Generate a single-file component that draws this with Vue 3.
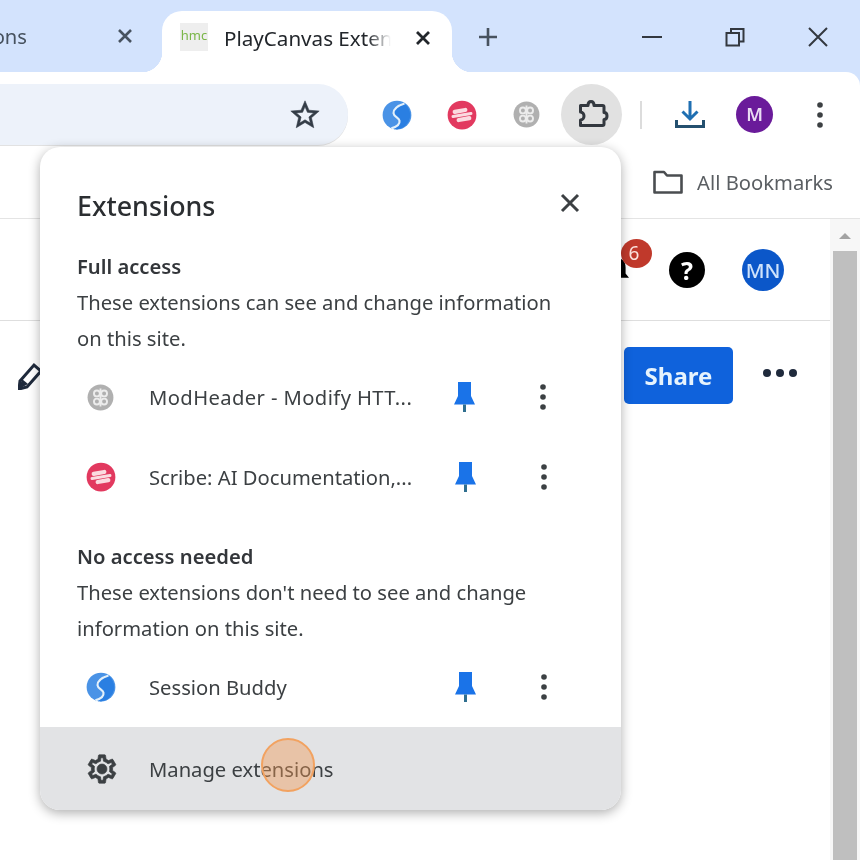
<template>
  <div class="page">
    <svg class="defs" aria-hidden="true">
      <symbol id="ext-session" viewBox="0 0 24 24">
        <circle cx="12" cy="12" r="11.5" fill="#4a93e6" />
        <path d="M17 2.200A11.500 11.500 0 0 1 12 23.500c-1.500 0-2.500-.3-3.500-.7 3.500-1.500 6-3.500 5.500-6.300-.5-2.500-4.500-2.800-4.800-6C9.500 7 13 4 17 2.200z" fill="#2a7fe2" />
        <path d="M18 2.800C13 4.400 9.200 7 9.200 10.500c.3 3.200 4.300 3.500 4.800 6 .5 2.800-2 4.800-6.500 6.200" fill="none" stroke="#e3f0fa" stroke-width="1.700" />
      </symbol>
      <symbol id="ext-scribe" viewBox="0 0 24 24">
        <circle cx="12" cy="12" r="11.500" fill="#e2395f" />
        <g fill="#fbdbe0" transform="rotate(-10 12 12)">
          <rect x="5" y="6.800" width="12" height="3.400" rx="1.700" />
          <rect x="3.500" y="10.800" width="17" height="2.400" rx="1.200" />
          <rect x="7" y="13.800" width="12" height="3.400" rx="1.700" />
        </g>
      </symbol>
      <symbol id="ext-modheader" viewBox="0 0 24 24">
        <circle cx="12" cy="12" r="11.500" fill="#b0b0b0" />
        <g fill="none" stroke="#ececec" stroke-width="1.700">
          <circle cx="8.800" cy="8.400" r="2.600" />
          <circle cx="15.200" cy="8.400" r="2.600" />
          <circle cx="8.800" cy="15.600" r="2.600" />
          <circle cx="15.200" cy="15.600" r="2.600" />
          <path d="M12 4v16" />
        </g>
      </symbol>
      <symbol id="pin" viewBox="0 0 21 30">
        <path d="M4 0h13v14l4 8.500H0L4 14z" fill="#1a73e8" />
        <path d="M9 22.500h3V30H9z" fill="#2f6f8f" />
      </symbol>
      <symbol id="kebab" viewBox="0 0 8 30">
        <circle cx="4" cy="5" r="2.800" fill="#3c4043" />
        <circle cx="4" cy="15" r="2.800" fill="#3c4043" />
        <circle cx="4" cy="25" r="2.800" fill="#3c4043" />
      </symbol>
    </svg>

    <div class="tabstrip">
      <div class="tab tab-inactive">
        <span class="tab-cut">ons</span>
        <svg class="tab-x" viewBox="0 0 16 16"><path d="M2 2l12 12M14 2L2 14" stroke="#47525f" stroke-width="2.600" /></svg>
      </div>
      <div class="tab tab-active">
        <span class="favicon">hmc</span>
        <span class="tab-title">PlayCanvas Extensions</span>
        <svg class="tab-x" viewBox="0 0 16 16"><path d="M2 2l12 12M14 2L2 14" stroke="#22262b" stroke-width="2.800" /></svg>
      </div>
      <svg class="new-tab" viewBox="0 0 20 20"><path d="M10 1v18M1 10h18" stroke="#47525f" stroke-width="2.600" /></svg>
      <div class="window-controls">
        <svg viewBox="0 0 20 20"><path d="M0 10h20" stroke="#33383f" stroke-width="2" /></svg>
        <svg viewBox="0 0 20 20"><path d="M1.500 6h12.500v12.500H1.500zM6 6V2h12.500v12.500H14" fill="none" stroke="#33383f" stroke-width="2" /></svg>
        <svg viewBox="0 0 20 20"><path d="M1 1l18 18M19 1L1 19" stroke="#33383f" stroke-width="2" /></svg>
      </div>
    </div>

    <div class="toolbar">
      <div class="omnibox">
        <svg class="star" viewBox="0 0 24 24"><path d="M22 9.240l-7.190-.62L12 2 9.190 8.630 2 9.240l5.460 4.730L5.820 21 12 17.270 18.180 21l-1.630-7.030L22 9.240zM12 15.400l-3.760 2.270 1-4.280-3.320-2.880 4.380-.38L12 6.100l1.710 4.040 4.380.38-3.320 2.880 1 4.280L12 15.400z" fill="#333c46" stroke="#333c46" stroke-width=".4" /></svg>
      </div>
      <div class="tool"><svg class="ext-icon"><use href="#ext-session" /></svg></div>
      <div class="tool"><svg class="ext-icon"><use href="#ext-scribe" /></svg></div>
      <div class="tool"><svg class="ext-icon small"><use href="#ext-modheader" /></svg></div>
      <div class="tool">
        <div class="puzzle-btn">
          <svg viewBox="0 0 32 32" class="puzzle"><path d="M4.500 6.500H12c0-2.500 1.200-4 3-4s3 1.500 3 4h8.500c.8 0 1.500.7 1.500 1.500v5.500c2 0 3 1.500 3 3.500s-1 3.500-3 3.500V25c0 .8-.7 1.500-1.500 1.500H4.500V21c2 0 3.500-1.800 3.500-4s-1.500-4-3.500-4z" fill="none" stroke="#33383f" stroke-width="3" stroke-linejoin="round" /></svg>
        </div>
      </div>
      <div class="tool-sep"><i></i></div>
      <div class="tool">
        <svg class="download" viewBox="0 0 30 30"><path d="M15 1v18M7.500 11.500L15 19l7.500-7.500" fill="none" stroke="#1f6fb2" stroke-width="3" /><path d="M1.500 20v6.500h27V20" fill="none" stroke="#24506f" stroke-width="3" /></svg>
      </div>
      <div class="tool"><span class="avatar">M</span></div>
      <div class="tool"><svg class="kebab"><use href="#kebab" /></svg></div>
    </div>

    <div class="bookmarks">
      <svg class="folder" viewBox="0 0 30 24"><path d="M1.500 2h9.500l3 3.500h14.500v17h-27z" fill="none" stroke="#4a4d50" stroke-width="2.600" stroke-linejoin="round" /></svg>
      <span>All Bookmarks</span>
    </div>

    <div class="below">
      <div class="main">
        <div class="app-header">
          <div class="bell">
            <svg viewBox="0 0 28 28"><path d="M14 0c6 0 10 4 10 11v7l4 5H0l4-5v-7C4 4 8 0 14 0zM10 25h8a4 3 0 0 1-8 0z" fill="#000" /></svg>
            <span class="badge">6</span>
          </div>
          <span class="help">?</span>
          <span class="user">MN</span>
        </div>
        <div class="actions">
          <svg class="pencil" viewBox="0 0 24 30"><path d="M2 21L16 5l7 6L9 27l-8 2z" fill="#fff" stroke="#1f2a3c" stroke-width="3" /><path d="M1 29l3-10 6 5z" fill="#1f2a3c" /></svg>
          <button class="share" type="button">Share</button>
          <div class="more"><i></i><i></i><i></i></div>
        </div>
      </div>
      <div class="scrollbar">
        <span class="arrow"></span>
        <div class="thumb"></div>
      </div>
    </div>

    <div class="popup">
      <div class="popup-head">
        <span class="popup-title">Extensions</span>
        <svg class="popup-x" viewBox="0 0 20 20"><path d="M2 2l16 16M18 2L2 18" stroke="#3c4043" stroke-width="3" /></svg>
      </div>
      <template v-for="section in sections" :key="section.title">
        <div class="section-text" :class="{ spaced: section.spaced }">
          <h3>{{ section.title }}</h3>
          <p>{{ section.line1 }}</p>
          <p>{{ section.line2 }}</p>
        </div>
        <div v-for="ext in section.items" :key="ext.name" class="ext-row">
          <svg class="ext-icon" :class="{ small: ext.small }"><use :href="ext.icon" /></svg>
          <span class="ext-name" :class="{ wide: ext.small }">{{ ext.name }}</span>
          <svg class="pin"><use href="#pin" /></svg>
          <svg class="kebab"><use href="#kebab" /></svg>
        </div>
      </template>
      <div class="manage">
        <svg class="gear" viewBox="0 0 24 24"><path d="M19.430 12.980c.04-.32.07-.64.07-.98 0-.34-.03-.66-.07-.98l2.110-1.650c.19-.15.24-.42.12-.64l-2-3.460c-.09-.16-.26-.25-.44-.25-.06 0-.12.01-.17.03l-2.490 1c-.52-.4-1.080-.73-1.690-.98l-.38-2.650C14.460 2.180 14.250 2 14 2h-4c-.25 0-.46.18-.49.42l-.38 2.650c-.61.25-1.170.59-1.690.98l-2.490-1c-.06-.02-.12-.03-.18-.03-.17 0-.34.09-.43.25l-2 3.460c-.13.22-.07.49.12.64l2.110 1.650c-.04.32-.07.65-.07.98 0 .33.03.66.07.98l-2.110 1.650c-.19.15-.24.42-.12.64l2 3.460c.09.16.26.25.44.25.06 0 .12-.01.17-.03l2.490-1c.52.4 1.080.73 1.690.98l.38 2.650c.03.24.24.42.49.42h4c.25 0 .46-.18.49-.42l.38-2.650c.61-.25 1.170-.59 1.690-.98l2.490 1c.06.02.12.03.18.03.17 0 .34-.09.43-.25l2-3.460c.12-.22.07-.49-.12-.64l-2.110-1.650zm-1.980-1.710c.04.31.05.52.05.73 0 .21-.02.43-.05.73l-.14 1.130.89.7 1.080.84-.7 1.210-1.270-.51-1.040-.42-.9.68c-.43.32-.84.56-1.250.73l-1.060.43-.16 1.130-.2 1.350h-1.400l-.19-1.350-.16-1.130-1.060-.43c-.43-.18-.83-.41-1.230-.71l-.91-.7-1.060.43-1.270.51-.7-1.210 1.080-.84.89-.7-.14-1.130c-.03-.31-.05-.54-.05-.74s.02-.43.05-.73l.14-1.130-.89-.7-1.080-.84.7-1.210 1.270.51 1.040.42.9-.68c.43-.32.84-.56 1.250-.73l1.060-.43.16-1.130.2-1.350h1.390l.19 1.350.16 1.130 1.060.43c.43.18.83.41 1.230.71l.91.7 1.060-.43 1.270-.51.7 1.210-1.070.85-.89.7.14 1.130zM12 8.500a3.500 3.500 0 1 0 0 7 3.500 3.500 0 0 0 0-7z" fill="#3c4043" stroke="#3c4043" stroke-width=".5" /></svg>
        <span>Manage extensions</span>
      </div>
    </div>

    <div class="hotspot"></div>
  </div>
</template>

<script setup>
const sections = [
  {
    title: 'Full access',
    line1: 'These extensions can see and change information',
    line2: 'on this site.',
    items: [
      { name: 'ModHeader - Modify HTT...', icon: '#ext-modheader', small: true },
      { name: 'Scribe: AI Documentation,...', icon: '#ext-scribe' }
    ]
  },
  {
    title: 'No access needed',
    line1: "These extensions don't need to see and change",
    line2: 'information on this site.',
    spaced: true,
    items: [{ name: 'Session Buddy', icon: '#ext-session' }]
  }
];
</script>

<style>
body {
  margin: 0;
  background: #fff;
}
</style>

<style scoped>
.page {
  position: relative;
  width: 860px;
  height: 860px;
  overflow: hidden;
  background: #d3e3fd;
  display: flex;
  flex-direction: column;
  font-family: "Noto Sans", "Open Sans", sans-serif;
  color: #3c4043;
  filter: blur(0.4px);
}

.defs {
  position: absolute;
  width: 0;
  height: 0;
}

.tabstrip {
  flex: 0 0 72px;
  display: flex;
  align-items: flex-start;
}

.tab {
  box-sizing: border-box;
  display: flex;
  align-items: center;
  font-size: 20.2px;
}

.tab-x {
  width: 16px;
  height: 16px;
  flex: none;
}

.tab-inactive {
  width: 162px;
  height: 72px;
  overflow: hidden;
  color: #47525f;
}

.tab-cut {
  flex: none;
  width: 35px;
  margin-left: -8px;
  text-align: right;
}

.tab-inactive .tab-x {
  margin-left: 90px;
}

.tab-active {
  position: relative;
  width: 290px;
  height: 61px;
  margin-top: 11px;
  padding: 0 21px 0 18px;
  background: #fff;
  border-radius: 20px 20px 0 0;
  color: #22262b;
  font-size: 20.6px;
}

.tab-active::before,
.tab-active::after {
  content: "";
  position: absolute;
  bottom: 0;
  width: 20px;
  height: 20px;
}

.tab-active::before {
  right: 100%;
  background: radial-gradient(circle at 0 0, transparent 20px, #fff 20.5px);
}

.tab-active::after {
  left: 100%;
  background: radial-gradient(circle at 100% 0, transparent 20px, #fff 20.5px);
}

.favicon {
  flex: none;
  width: 28px;
  height: 28px;
  margin-top: -10px;
  background: #eeeeee;
  color: #7ab648;
  font-size: 13px;
  line-height: 25px;
  text-align: center;
}

.tab-title {
  flex: 1;
  margin: -8px 24px 0 16px;
  overflow: hidden;
  white-space: nowrap;
  -webkit-mask-image: linear-gradient(to right, #000 86%, transparent 100%);
  mask-image: linear-gradient(to right, #000 86%, transparent 100%);
}

.tab-active .tab-x {
  margin-top: -8px;
}

.new-tab {
  width: 20px;
  height: 20px;
  margin: 27px 0 0 26px;
}

.window-controls {
  display: flex;
  gap: 63px;
  margin: 27px 0 0 auto;
  padding-right: 32px;
}

.window-controls svg {
  width: 20px;
  height: 20px;
}

.toolbar {
  flex: 0 0 auto;
  display: flex;
  align-items: center;
  padding: 12px 0 1px;
  background: #fff;
  border-top-right-radius: 14px;
}

.omnibox {
  width: 348px;
  height: 61px;
  box-sizing: border-box;
  margin-right: 16px;
  padding-right: 26px;
  display: flex;
  align-items: center;
  justify-content: flex-end;
  background: #edf2fa;
  border-radius: 0 30px 30px 0;
  box-shadow: 0 1px 0 #e2e2e2;
}

.star {
  width: 34px;
  height: 34px;
}

.tool {
  flex: 0 0 65px;
  display: flex;
  align-items: center;
  justify-content: center;
}

.tool-sep {
  flex: 0 0 33px;
  display: flex;
  justify-content: center;
}

.tool-sep i {
  width: 2px;
  height: 28px;
  background: #dcdcdc;
}

.ext-icon {
  width: 30px;
  height: 30px;
  flex: none;
}

.ext-icon.small {
  width: 27px;
  height: 27px;
}

.puzzle-btn {
  width: 61px;
  height: 61px;
  border-radius: 50%;
  background: #e1e1e1;
  display: flex;
  align-items: center;
  justify-content: center;
}

.puzzle {
  width: 32px;
  height: 32px;
  overflow: visible;
}

.download {
  width: 30px;
  height: 30px;
}

.avatar {
  width: 37px;
  height: 37px;
  border-radius: 50%;
  background: #6a1b9a;
  color: #eadcf3;
  font-size: 18px;
  font-weight: 600;
  line-height: 37px;
  text-align: center;
}

.kebab {
  width: 8px;
  height: 30px;
  flex: none;
}

.bookmarks {
  flex: 0 0 72px;
  display: flex;
  align-items: center;
  justify-content: flex-end;
  gap: 14px;
  padding-right: 27px;
  background: #fff;
  border-bottom: 1px solid #e4e4e4;
  font-size: 20.2px;
  color: #5a5e62;
}

.folder {
  width: 30px;
  height: 24px;
}

.below {
  flex: 1;
  display: flex;
  min-height: 0;
  background: #fff;
}

.main {
  flex: 1;
  min-width: 0;
}

.app-header {
  height: 102px;
  box-sizing: border-box;
  display: flex;
  align-items: center;
  justify-content: flex-end;
  padding-right: 46px;
  border-bottom: 1px solid #dedede;
}

.bell {
  position: relative;
  width: 28px;
  height: 28px;
  margin-right: 36px;
}

.bell svg {
  display: block;
  width: 24px;
  height: 28px;
}

.badge {
  position: absolute;
  left: 16px;
  top: -17px;
  width: 31px;
  height: 29px;
  box-sizing: border-box;
  padding-right: 5px;
  border-radius: 50%;
  background: #c0392b;
  color: #fbe3dd;
  font-size: 19px;
  line-height: 29px;
  text-align: center;
}

.help {
  width: 36px;
  height: 36px;
  margin-right: 37px;
  border-radius: 50%;
  background: #000;
  color: #fff;
  font-size: 25px;
  font-weight: 700;
  line-height: 36px;
  text-align: center;
}

.user {
  width: 42px;
  height: 42px;
  border-radius: 50%;
  background: #0b57c9;
  color: #cfe3fb;
  font-size: 20.5px;
  font-weight: 500;
  line-height: 42px;
  text-align: center;
}

.actions {
  display: flex;
  align-items: flex-start;
  padding: 26px 33px 0 18px;
}

.pencil {
  width: 24px;
  height: 30px;
  margin-top: 13px;
  margin-right: auto;
}

.share {
  width: 109px;
  height: 57px;
  border: 0;
  border-radius: 5px;
  background: #0f62dc;
  color: #e6f3fd;
  font-family: inherit;
  font-size: 24px;
  font-weight: 700;
}

.more {
  display: flex;
  gap: 5px;
  margin: 22px 0 0 30px;
}

.more i {
  width: 8px;
  height: 8px;
  border-radius: 50%;
  background: #1f2a3c;
}

.scrollbar {
  flex: 0 0 30px;
  box-sizing: border-box;
  padding: 0 3px;
  background: #f7f7f7;
  display: flex;
  flex-direction: column;
  align-items: center;
}

.arrow {
  flex: none;
  width: 0;
  height: 0;
  margin: 14px 0 12px;
  border-left: 6px solid transparent;
  border-right: 6px solid transparent;
  border-bottom: 6px solid #a3a3a3;
}

.thumb {
  flex: 1;
  width: 100%;
  background: #bfbfbf;
}

.popup {
  position: absolute;
  left: 40px;
  top: 147px;
  width: 581px;
  height: 663px;
  overflow: hidden;
  display: flex;
  flex-direction: column;
  background: #fff;
  border-radius: 20px;
  box-shadow: 0 3px 12px rgba(0, 0, 0, 0.32);
}

.popup-head {
  flex: 0 0 101px;
  box-sizing: border-box;
  display: flex;
  align-items: flex-start;
  justify-content: space-between;
  padding: 41px 41px 0 37px;
}

.popup-title {
  font-size: 26.8px;
  font-weight: 500;
  line-height: 36px;
  color: #2b2e31;
}

.popup-x {
  width: 20px;
  height: 20px;
  margin-top: 5px;
}

.section-text {
  padding: 0 37px 1px;
  font-size: 20.2px;
  line-height: 36px;
  color: #3c4043;
}

.section-text.spaced {
  margin-top: 21px;
}

.section-text h3 {
  margin: 0;
  font-size: 20.2px;
  font-weight: 600;
  color: #33363a;
}

.section-text p {
  margin: 0;
}

.ext-row {
  flex: 0 0 80px;
  display: flex;
  align-items: center;
  padding-left: 46px;
  font-size: 20.2px;
}

.ext-row .ext-icon {
  margin-right: 33px;
}

.ext-row .ext-icon.small {
  margin: 0 35px 0 1px;
}

.ext-name {
  flex: 0 0 306px;
  white-space: nowrap;
}

.ext-name.wide {
  flex-basis: 305px;
  letter-spacing: 0.4px;
}

.pin {
  flex: none;
  width: 21px;
  height: 30px;
}

.ext-row .kebab {
  margin-left: 64px;
}

.manage {
  flex: 1;
  display: flex;
  align-items: center;
  gap: 30px;
  padding-left: 45px;
  background: #e2e3e5;
  font-size: 20.2px;
}

.gear {
  width: 34px;
  height: 34px;
}

.hotspot {
  position: absolute;
  left: 261px;
  top: 738px;
  width: 54px;
  height: 54px;
  box-sizing: border-box;
  border: 2px solid #f2a260;
  border-radius: 50%;
  background: rgba(240, 150, 80, 0.42);
}
</style>
